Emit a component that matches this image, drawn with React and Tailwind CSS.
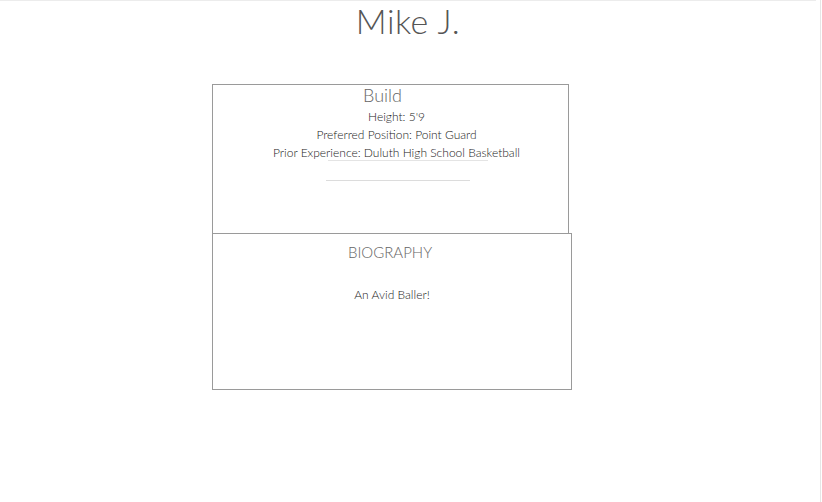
export default function App() {
  return (
    <div className="flex h-[502px] w-[822px] bg-white" style={{ fontFamily: "Lato, 'Open Sans', sans-serif" }}>
      <div className="w-[816px] border-t border-[#ececec]">
        <h1 className="mt-[1px] text-center text-[34px] font-light leading-[38px] tracking-[0.5px] text-[#555]">Mike J.</h1>
        <div className="ml-[212px] mt-[44px] h-[150px] w-[357px] border border-[#9a9a9a]">
          <div className="pr-[16px] text-center text-[18px] font-light leading-[20px] text-[#666]">Build</div>
          <div className="mt-[3px] pl-[12px] text-center text-[12px] font-light leading-[18px] text-[#222]">
            <div>Height: 5'9</div>
            <div>Preferred Position: Point Guard</div>
            <div>Prior Experience: Duluth High School Basketball</div>
          </div>
          <div className="-mt-[2px] ml-[115px] h-px w-[160px] bg-[#e4e4e4]"></div>
          <div className="ml-[113px] mt-[19px] h-px w-[144px] bg-[#dcdcdc]"></div>
        </div>
        <div className="-mt-px ml-[212px] h-[157px] w-[360px] border border-[#9a9a9a] pt-[8px]">
          <div className="pr-[4px] text-center text-[15px] font-light leading-[20px] text-[#666]">BIOGRAPHY</div>
          <div className="mt-[24px] text-center text-[12px] font-light leading-[18px] text-[#222]">An Avid Baller!</div>
        </div>
      </div>
      <div className="ml-[4px] w-px bg-[#e6e6e6]"></div>
    </div>
  );
}
